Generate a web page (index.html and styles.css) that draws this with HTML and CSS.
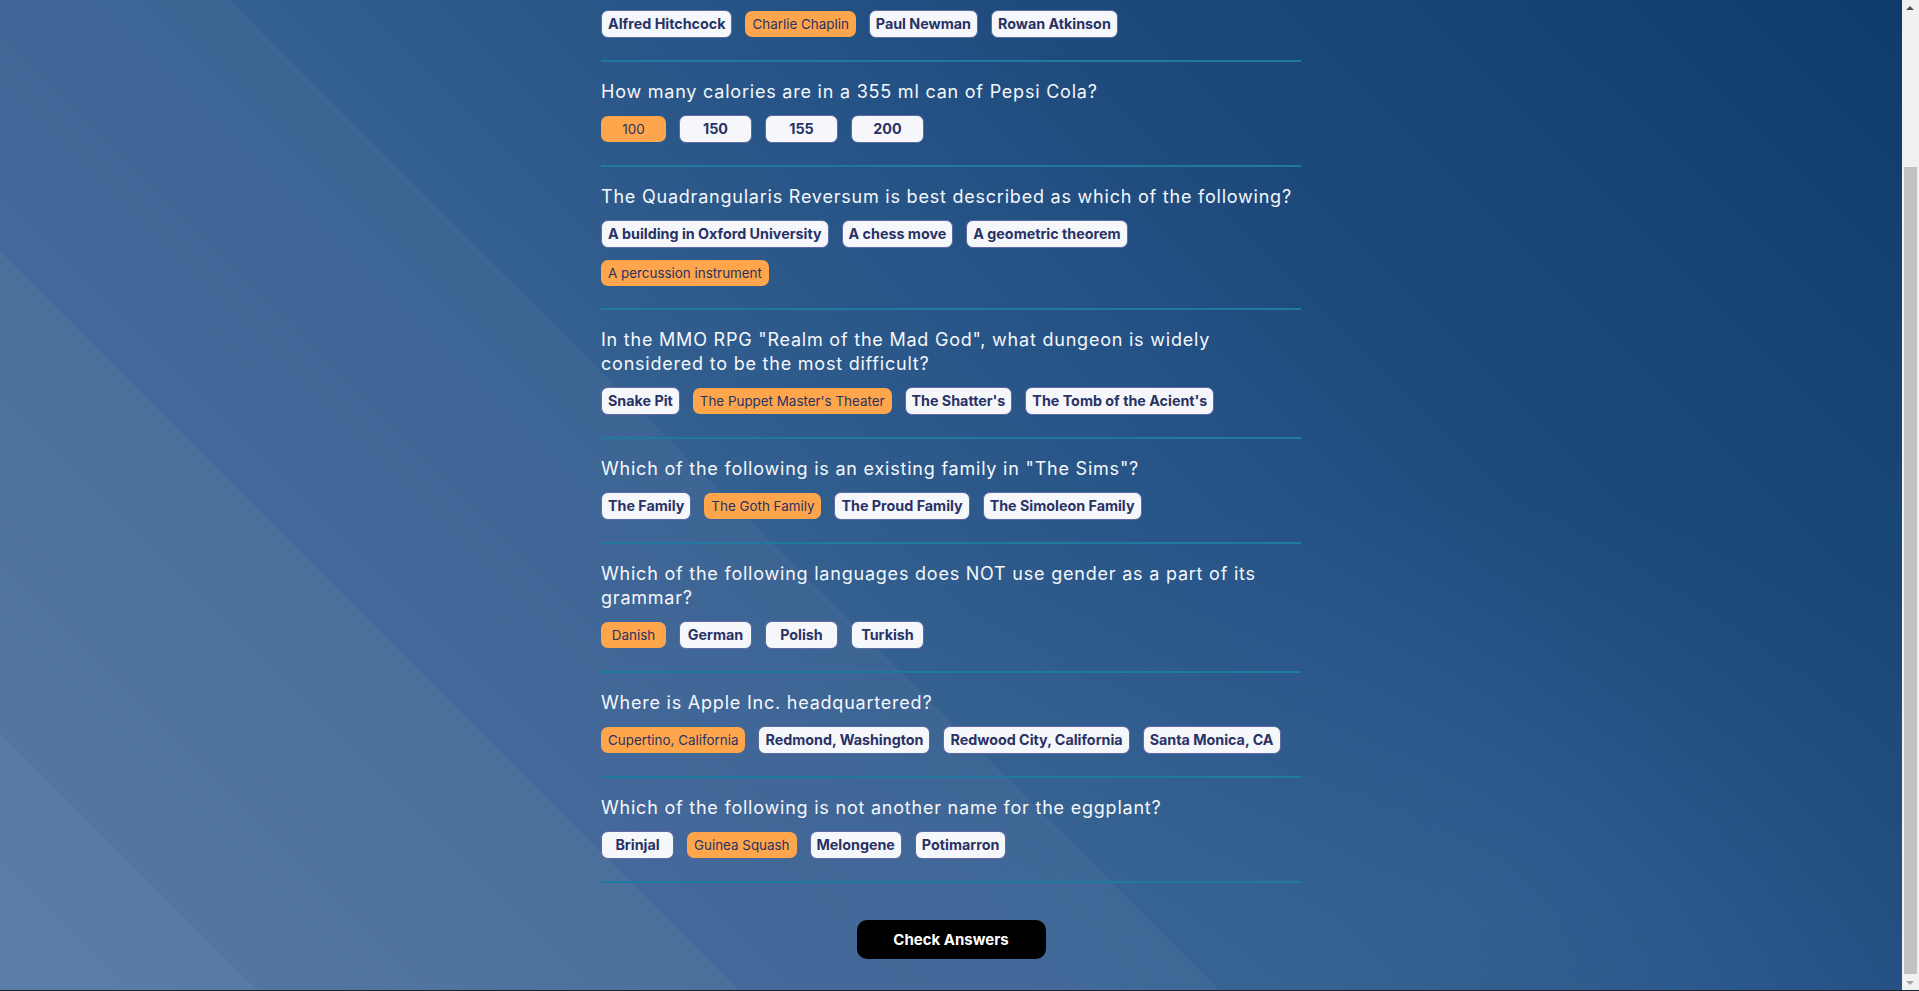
FILE: index.html
```html
<!DOCTYPE html>
<html lang="en">
<head>
<meta charset="utf-8">
<title>Quizzical</title>
<link rel="stylesheet" href="styles.css">
</head>
<body>
<main class="quiz">
  <section class="question">
    <h2 class="question-text">Who played the Tramp in the 1936 film "Modern Times"?</h2>
    <div class="answers">
      <button class="answer">Alfred Hitchcock</button>
      <button class="answer selected">Charlie Chaplin</button>
      <button class="answer">Paul Newman</button>
      <button class="answer">Rowan Atkinson</button>
    </div>
  </section>
  <section class="question">
    <h2 class="question-text">How many calories are in a 355 ml can of Pepsi Cola?</h2>
    <div class="answers">
      <button class="answer selected">100</button>
      <button class="answer">150</button>
      <button class="answer">155</button>
      <button class="answer">200</button>
    </div>
  </section>
  <section class="question">
    <h2 class="question-text">The Quadrangularis Reversum is best described as which of the following?</h2>
    <div class="answers">
      <button class="answer">A building in Oxford University</button>
      <button class="answer">A chess move</button>
      <button class="answer">A geometric theorem</button>
      <button class="answer selected">A percussion instrument</button>
    </div>
  </section>
  <section class="question">
    <h2 class="question-text">In the MMO RPG "Realm of the Mad God", what dungeon is widely considered to be the most difficult?</h2>
    <div class="answers">
      <button class="answer">Snake Pit</button>
      <button class="answer selected">The Puppet Master's Theater</button>
      <button class="answer">The Shatter's</button>
      <button class="answer">The Tomb of the Acient's</button>
    </div>
  </section>
  <section class="question">
    <h2 class="question-text">Which of the following is an existing family in "The Sims"?</h2>
    <div class="answers">
      <button class="answer">The Family</button>
      <button class="answer selected">The Goth Family</button>
      <button class="answer">The Proud Family</button>
      <button class="answer">The Simoleon Family</button>
    </div>
  </section>
  <section class="question">
    <h2 class="question-text">Which of the following languages does NOT use gender as a part of its grammar?</h2>
    <div class="answers">
      <button class="answer selected">Danish</button>
      <button class="answer">German</button>
      <button class="answer">Polish</button>
      <button class="answer">Turkish</button>
    </div>
  </section>
  <section class="question">
    <h2 class="question-text">Where is Apple Inc. headquartered?</h2>
    <div class="answers">
      <button class="answer selected">Cupertino, California</button>
      <button class="answer">Redmond, Washington</button>
      <button class="answer">Redwood City, California</button>
      <button class="answer">Santa Monica, CA</button>
    </div>
  </section>
  <section class="question">
    <h2 class="question-text">Which of the following is not another name for the eggplant?</h2>
    <div class="answers">
      <button class="answer">Brinjal</button>
      <button class="answer selected">Guinea Squash</button>
      <button class="answer">Melongene</button>
      <button class="answer">Potimarron</button>
    </div>
  </section>
  <div class="actions">
    <button class="check-btn">Check Answers</button>
  </div>
</main>
<div class="scrollbar" aria-hidden="true">
  <span class="scroll-arrow up"></span>
  <span class="scroll-thumb"></span>
  <span class="scroll-arrow down"></span>
</div>
<div class="window-edge" aria-hidden="true"></div>
<script src="script.js"></script>
</body>
</html>
```

FILE: styles.css
```css
html {
  min-height: 100%;
  background-color: #2b5687;
  background-image:
    radial-gradient(ellipse 700px 420px at 76% 92%, rgba(120, 160, 210, 0.10), rgba(120, 160, 210, 0) 100%),
    linear-gradient(45deg,
      #5b7ea8 0%, #587ba5 8.9%,
      #52769f 8.9%, #4b709c 25.4%,
      #45699a 25.4%, #3c6594 41.9%,
      #33608f 41.9%, #2b5889 52%,
      #265386 60%, #1f4b7d 68%,
      #184675 81%, #0f3b6c 100%);
  background-attachment: fixed;
  background-repeat: no-repeat;
}

body {
  margin: 0;
  padding-right: 17px;
  font-family: Inter, "Noto Sans", sans-serif;
}

.quiz {
  width: 700px;
  margin: 0 auto;
  padding: 140px 0 32px;
}

.question {
  padding: 18px 0 22px;
  border-bottom: 2px solid #1f7aa0;
}

.question-text {
  margin: 0 0 11px;
  font-family: Inter, "Noto Sans", sans-serif;
  font-size: 18px;
  font-weight: 400;
  line-height: 24px;
  letter-spacing: 0.78px;
  color: #f5f7fb;
}

.answers {
  display: flex;
  flex-wrap: wrap;
  align-items: center;
  gap: 12px 13px;
}

.answer {
  box-sizing: border-box;
  min-width: 73px;
  padding: 4px 6px;
  border: 1px solid #5e6aa6;
  border-radius: 7px;
  background: #f5f7fb;
  color: #293264;
  font-family: Inter, "Noto Sans", sans-serif;
  font-size: 14.3px;
  font-weight: 700;
  line-height: 18px;
  text-align: center;
  cursor: pointer;
}

.answer.selected {
  min-width: 65px;
  padding: 4px 7px;
  border: none;
  background: #ffa64d;
  font-size: 13.4px;
  font-weight: 400;
}

.actions {
  display: flex;
  justify-content: center;
  margin-top: 37px;
}

.check-btn {
  width: 189px;
  height: 39px;
  border: none;
  border-radius: 10px;
  background: #000;
  color: #fff;
  font-family: Inter, "Liberation Sans", sans-serif;
  font-size: 15px;
  font-weight: 700;
  cursor: pointer;
}

/* browser scrollbar as it appears in the capture */
.scrollbar {
  position: fixed;
  top: 0;
  right: 0;
  bottom: 0;
  width: 17px;
  background: #f1f1f1;
  display: flex;
  flex-direction: column;
  align-items: center;
}

.scroll-arrow {
  flex: 0 0 17px;
  width: 17px;
  position: relative;
}

.scroll-arrow::after {
  content: "";
  position: absolute;
  left: 4px;
  width: 0;
  height: 0;
  border-left: 4px solid transparent;
  border-right: 4px solid transparent;
}

.scroll-arrow.up::after {
  top: 6px;
  border-bottom: 4px solid #505050;
}

.scroll-arrow.down::after {
  top: 7px;
  border-top: 4px solid #a3a3a3;
}

.scroll-thumb {
  margin-top: 150px;
  flex: 1 1 auto;
  width: 13px;
  background: #c1c1c1;
}

.window-edge {
  position: fixed;
  left: 0;
  right: 0;
  bottom: 0;
  height: 1px;
  background: #1c2430;
}
```

FILE: script.js
```js
function scrollToEnd() {
  window.scrollTo(0, document.documentElement.scrollHeight);
}
scrollToEnd();
window.addEventListener('load', scrollToEnd);
```
